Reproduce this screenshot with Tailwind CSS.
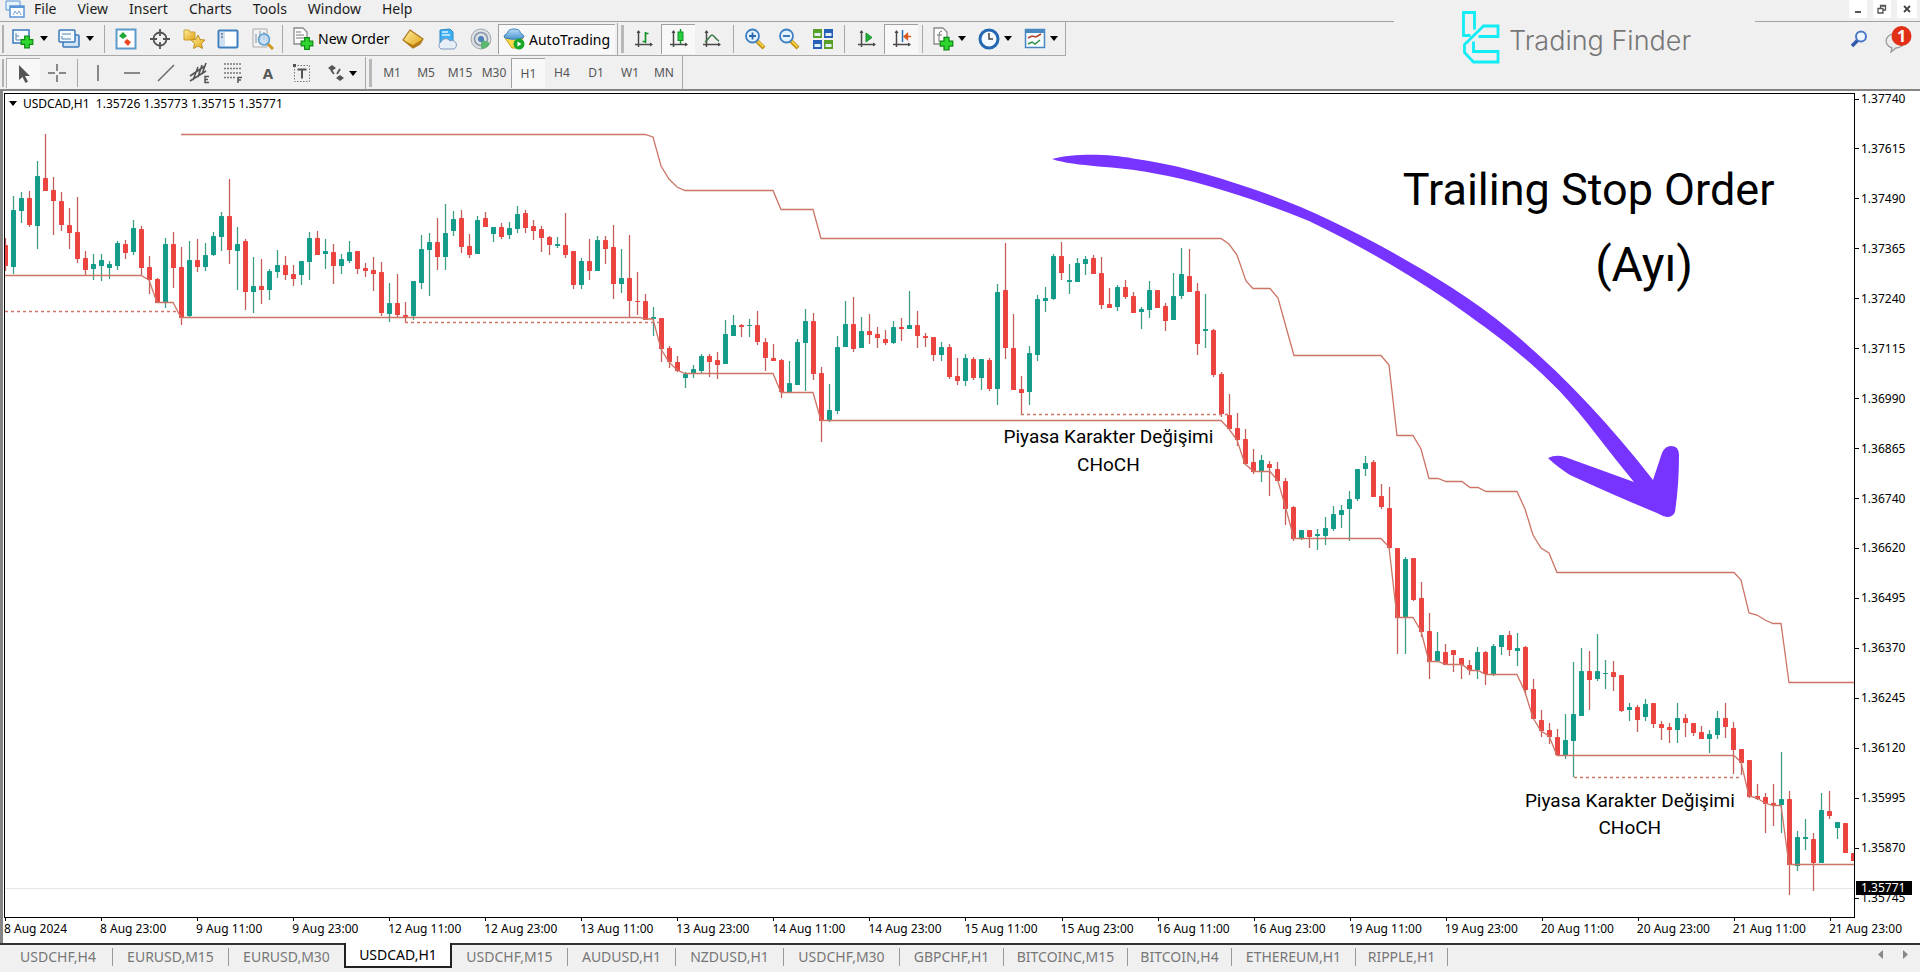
<!DOCTYPE html>
<html lang="en">
<head>
<meta charset="utf-8">
<title>USDCAD,H1</title>
<script src="https://cdn.jsdelivr.net/npm/@tailwindcss/browser@4"></script>
</head>
<body class="bg-[#f0f0f0] text-black">
<svg class="absolute h-0 w-0" aria-hidden="true">
  <defs>
    <linearGradient id="gold" x1="0" y1="0" x2="1" y2="1"><stop offset="0" stop-color="#fff0a0"/><stop offset="1" stop-color="#e0a010"/></linearGradient>
    <linearGradient id="sky" x1="0" y1="0" x2="0" y2="1"><stop offset="0" stop-color="#b8dcf8"/><stop offset="1" stop-color="#4a94d0"/></linearGradient>
    <symbol id="plus" viewBox="0 0 12 12"><path d="M4 1h4v3h3v4H8v3H4V8H1V4h3z" fill="#2fd62f" stroke="#0b8a12"/></symbol>
    <symbol id="caret" viewBox="0 0 8 5"><path d="M0 0h8L4 5z" fill="#000"/></symbol>
    <symbol id="axes" viewBox="0 0 20 20"><path d="M4.500 2v16M1 15.500h17" stroke="#4a4a4a" stroke-width="1.500" fill="none"/><path d="M2.500 4l2-3 2 3zM16 13.500l3 2-3 2z" fill="#4a4a4a"/></symbol>
    <symbol id="lens" viewBox="0 0 22 22"><path d="M13 13l7 7" stroke="#c08a10" stroke-width="4"/><path d="M13.500 13l6 6" stroke="#f6d040" stroke-width="2"/><circle cx="8.500" cy="8" r="6.500" fill="#e4f3fd" stroke="#3e7fc4" stroke-width="1.800"/></symbol>
  </defs>
</svg>

<div class="flex min-h-screen flex-col font-['Noto_Sans','Open_Sans',sans-serif]">
  <header class="relative">
    <nav class="flex h-[22px] items-center border-b border-[#a3a3a3] pb-[3px] text-[14px] leading-[18px] text-[#1c1c1c]" aria-label="Main menu">
      <svg class="mr-[9px] ml-[5px] h-[18px] w-5" viewBox="0 0 20 18"><path d="M1 1h14v9H1z" fill="#e8f2fc" stroke="#5b95d6"/><path d="M5 6h14v11H5z" fill="#fff" stroke="#5b95d6" stroke-width="1.500"/><path d="M5 7h14" stroke="#5b95d6" stroke-width="2"/><path d="M8 15l2-4 2 3 2-3 2 4" fill="none" stroke="#7aa6da"/></svg>
      <div class="flex gap-[21px]">
        <button>File</button><button>View</button><button>Insert</button><button>Charts</button><button>Tools</button><button>Window</button><button>Help</button>
      </div>
      <div class="mr-[3px] ml-auto flex gap-[6px] self-start">
        <button aria-label="Minimize" class="flex h-[18px] w-[18px] items-center justify-center bg-white"><svg class="h-3 w-3" viewBox="0 0 12 12"><path d="M3 9h6" stroke="#555" stroke-width="2"/></svg></button>
        <button aria-label="Restore" class="flex h-[18px] w-[18px] items-center justify-center bg-white"><svg class="h-3 w-3" viewBox="0 0 12 12"><path d="M2 5.500h5V10H2zM4.500 5V2.500h5V7H7M4.500 3h5" fill="none" stroke="#555" stroke-width="1.300"/></svg></button>
        <button aria-label="Close" class="flex h-[18px] w-[20px] items-center justify-center bg-white"><svg class="h-3 w-3" viewBox="0 0 12 12"><path d="M3 3l6 6M9 3l-6 6" stroke="#444" stroke-width="1.800"/></svg></button>
      </div>
    </nav>

    <div class="flex justify-between">
      <div class="flex h-[34px] items-center border-r border-b border-[#a8a8a8] text-[14px]" role="toolbar" aria-label="Standard">
        <span class="mx-[2px] h-7 w-[2px] bg-[#b0b0b0]"></span>
        <button class="flex w-12 items-center gap-[6px] pl-[6px]" aria-label="New chart"><svg class="h-[22px] w-[22px]" viewBox="0 0 22 22"><rect x="1" y="2" width="16" height="13" fill="#f4faff" stroke="#3a7ab8" stroke-width="1.500"/><path d="M4 5v7h10M4 8h3" stroke="#5a86ac" fill="none"/><use href="#plus" x="8" y="7" width="14" height="14"/></svg><svg class="h-[5px] w-2"><use href="#caret"/></svg></button>
        <button class="flex w-12 items-center gap-[6px] pl-1" aria-label="Profiles"><svg class="h-[22px] w-[22px]" viewBox="0 0 22 22"><rect x="5" y="7" width="16" height="12" rx="1" fill="#cfe4f7" stroke="#3a7ab8" stroke-width="1.500"/><rect x="1" y="2" width="16" height="12" rx="1" fill="#f4faff" stroke="#3a7ab8" stroke-width="1.500"/><path d="M4 8v3h9M4 6h9" stroke="#5a86ac" fill="none"/></svg><svg class="h-[5px] w-2"><use href="#caret"/></svg></button>
        <span class="mr-[4px] ml-[2px] h-7 w-px bg-[#a8a8a8]"></span>
        <button class="flex w-[34px] justify-center" aria-label="Market Watch"><svg class="h-[22px] w-[22px]" viewBox="0 0 22 22"><rect x="1.500" y="1.500" width="19" height="19" fill="#fff" stroke="#5c9ccc" stroke-width="2"/><path d="M8 4l4 4-4 3-4-3z" fill="#20a838"/><path d="M12 11l4 3-3 4-4-4z" fill="#e84820"/></svg></button>
        <button class="flex w-[34px] justify-center" aria-label="Data window"><svg class="h-[22px] w-[22px]" viewBox="0 0 22 22"><circle cx="11" cy="11" r="6.500" fill="none" stroke="#555" stroke-width="1.800"/><path d="M11 1v7M11 14v7M1 11h7M14 11h7" stroke="#555" stroke-width="1.800"/></svg></button>
        <button class="flex w-[34px] justify-center" aria-label="Navigator"><svg class="h-[22px] w-[22px]" viewBox="0 0 22 22"><path d="M1 2h5l1 2h5v8H1z" fill="url(#gold)" stroke="#c8a030"/><path d="M15 7l2.200 4.500 4.800.5-3.500 3.500 1 5-4.500-2.500-4.500 2.500 1-5L8 12l4.800-.5z" fill="url(#gold)" stroke="#c09020"/></svg></button>
        <button class="flex w-[34px] justify-center" aria-label="Terminal"><svg class="h-[22px] w-[22px]" viewBox="0 0 22 22"><rect x="1.500" y="2.500" width="19" height="17" rx="1" fill="#fff" stroke="#3f7fc0" stroke-width="2"/><path d="M3 4h5v14H3z" fill="#cfe0f2"/><path d="M4 6h2M4 9h2" stroke="#345"/></svg></button>
        <button class="flex w-[36px] justify-center" aria-label="Strategy tester"><svg class="h-[22px] w-[22px]" viewBox="0 0 22 22"><path d="M1 1h14v18H1z" fill="#f2f2f2" stroke="#aaa"/><path d="M4 6v9M8 3v9M12 4v8" stroke="#7890a8"/><path d="M16 16l5 5" stroke="#d0981c" stroke-width="3"/><circle cx="12" cy="11.500" r="5.500" fill="#b8daf4aa" stroke="#5c9ccc" stroke-width="1.500"/></svg></button>
        <span class="mr-[5px] ml-[1px] h-7 w-px bg-[#a8a8a8]"></span>
        <button class="flex w-[108px] items-center gap-1 whitespace-nowrap pl-1"><svg class="h-6 w-[22px] shrink-0" viewBox="0 0 22 24"><path d="M2 1h9l4 4v12H2z" fill="#fdfdfd" stroke="#8a8a8a" stroke-width="1.300"/><path d="M4 5h5M4 8h8M4 11h8" stroke="#777"/><use href="#plus" x="8" y="9" width="14" height="15"/></svg>New Order</button>
        <button class="flex w-[34px] justify-center" aria-label="MetaEditor"><svg class="h-[22px] w-[22px]" viewBox="0 0 22 22"><path d="M8 2l13 9-3 5-7 4-10-8z" fill="url(#gold)" stroke="#a87820" stroke-width="1.200"/><path d="M1 12l10 5 10-6-3 5-7 4z" fill="#b87c14"/></svg></button>
        <button class="flex w-[34px] justify-center" aria-label="Hosting"><svg class="h-[22px] w-[22px]" viewBox="0 0 22 22"><path d="M4 2l10-1 3 3v11H4z" fill="#3fb0f0" stroke="#2888c8"/><path d="M6 4h6M6 7h8" stroke="#d8f0ff" stroke-width="1.500"/><path d="M5 21a4 4 0 0 1 0-7 5 5 0 0 1 9-1 4 4 0 0 1 4 8z" fill="#e6eef8" stroke="#8098c0"/></svg></button>
        <button class="flex w-[34px] justify-center" aria-label="Signals"><svg class="h-[22px] w-[22px]" viewBox="0 0 22 22"><circle cx="11" cy="11" r="10" fill="#dce0e4" stroke="#a0a8b0"/><circle cx="11" cy="11" r="6.500" fill="none" stroke="#8898a8" stroke-width="1.500"/><path d="M11 11v10a10 10 0 0 0 9-6z" fill="#5cb870"/><circle cx="11" cy="11" r="3" fill="#5080b8"/></svg></button>
        <button class="mr-[2px] flex h-[30px] w-[117px] items-center gap-1 border-t border-l border-[#a0a0a0] bg-[#f8f8f8] pl-1 whitespace-nowrap"><svg class="h-[22px] w-[22px] shrink-0" viewBox="0 0 22 22"><path d="M2 10h18l-7 10H9z" fill="#f8d848" stroke="#c8a020"/><path d="M1 9c0-3 4-3 4-5s3-3 6-3 6 1 6 3 4 2 4 5c-4 3-16 3-20 0z" fill="url(#sky)" stroke="#3a80b8"/><circle cx="16" cy="16" r="5.500" fill="#18a828"/><path d="M14.500 13.500v5l4-2.500z" fill="#fff"/></svg>AutoTrading</button>
        <span class="mr-[3px] h-8 w-px bg-[#a8a8a8]"></span><span class="mr-[3px] h-7 w-[3px] bg-[#b8b8b8]"></span>
        <button class="flex h-[30px] w-[34px] items-center justify-center" aria-label="Bar chart"><svg class="h-5 w-5" viewBox="0 0 20 20"><use href="#axes"/><path d="M11.500 3v11M8.500 12.500h3M11.500 4.500h3" stroke="#149028" stroke-width="1.700"/></svg></button>
        <button class="flex h-[30px] w-[34px] items-center justify-center border-t border-l border-[#a0a0a0] bg-[#f8f8f8]" aria-label="Candlesticks"><svg class="h-5 w-5" viewBox="0 0 20 20"><use href="#axes"/><path d="M11.500 0v15" stroke="#149028" stroke-width="1.500"/><rect x="9" y="3" width="5" height="8.500" fill="#28d040" stroke="#149028"/></svg></button>
        <button class="flex h-[30px] w-[34px] items-center justify-center" aria-label="Line chart"><svg class="h-5 w-5" viewBox="0 0 20 20"><use href="#axes"/><path d="M3 13c4-3 5-7 7-7s4 5 7 6" fill="none" stroke="#3a7848" stroke-width="1.500"/></svg></button>
        <span class="mx-1 h-7 w-px bg-[#a8a8a8]"></span>
        <button class="flex w-[34px] justify-center" aria-label="Zoom in"><svg class="h-[22px] w-[22px]" viewBox="0 0 22 22"><use href="#lens"/><path d="M5 8h7M8.500 4.500v7" stroke="#2c68b0" stroke-width="1.800"/></svg></button>
        <button class="flex w-[34px] justify-center" aria-label="Zoom out"><svg class="h-[22px] w-[22px]" viewBox="0 0 22 22"><use href="#lens"/><path d="M5 8h7" stroke="#2c68b0" stroke-width="1.800"/></svg></button>
        <button class="flex w-[34px] justify-center" aria-label="Tile windows"><svg class="h-[22px] w-[22px]" viewBox="0 0 22 22"><path d="M1 1h9v9H1zM12 12h9v9h-9z" fill="#58a028"/><path d="M12 1h9v9h-9zM1 12h9v9H1z" fill="#2860b8"/><path d="M2.500 5h6v3h-6zM13.500 5h6v3h-6zM2.500 16h6v3h-6zM13.500 16h6v3h-6z" fill="#e4f0f8"/></svg></button>
        <span class="mr-[5px] ml-1 h-7 w-px bg-[#a8a8a8]"></span>
        <button class="flex h-[30px] w-[34px] items-center justify-center" aria-label="Auto scroll"><svg class="h-5 w-5" viewBox="0 0 20 20"><use href="#axes"/><path d="M9 4l6 4.500L9 13z" fill="#20b038" stroke="#149028"/></svg></button>
        <button class="flex h-[30px] w-[34px] items-center justify-center border-t border-l border-[#a0a0a0] bg-[#f8f8f8]" aria-label="Chart shift"><svg class="h-5 w-5" viewBox="0 0 20 20"><use href="#axes"/><path d="M10.500 1v12" stroke="#2870b0" stroke-width="1.500"/><path d="M12 7.500h7M15.500 4.500l-3.500 3 3.500 3z" stroke="#d85820" stroke-width="1.300" fill="#d85820"/></svg></button>
        <span class="mx-1 h-7 w-px bg-[#a8a8a8]"></span>
        <button class="flex w-[46px] items-center gap-1 pl-[5px]" aria-label="Indicators"><svg class="h-6 w-[22px]" viewBox="0 0 22 24"><path d="M2 1h9l4 4v12H2z" fill="#fdfdfd" stroke="#8a8a8a" stroke-width="1.300"/><path d="M10 4q-3 0-3 4v7M5 8h5" stroke="#777" fill="none"/><use href="#plus" x="7" y="9" width="15" height="15"/></svg><svg class="h-[5px] w-2"><use href="#caret"/></svg></button>
        <button class="flex w-[46px] items-center gap-1 pl-[5px]" aria-label="Periods"><svg class="h-[22px] w-[22px]" viewBox="0 0 22 22"><circle cx="11" cy="11" r="9" fill="#f4faff" stroke="#2468b4" stroke-width="3"/><path d="M11 5v6h4" stroke="#444" stroke-width="1.500" fill="none"/></svg><svg class="h-[5px] w-2"><use href="#caret"/></svg></button>
        <button class="flex w-[46px] items-center gap-1 pl-[5px]" aria-label="Templates"><svg class="h-[22px] w-[22px]" viewBox="0 0 22 22"><rect x="1.500" y="1.500" width="19" height="18" fill="#f6fbff" stroke="#4888c0" stroke-width="1.500"/><path d="M2 3.500h18" stroke="#4888c0" stroke-width="3"/><path d="M4 10l4-2 4 1 5-3" stroke="#b04028" fill="none" stroke-width="1.500"/><path d="M4 16l4-2 3 2 5-4" stroke="#2c9040" fill="none" stroke-width="1.500"/></svg><svg class="h-[5px] w-2"><use href="#caret"/></svg></button>
      </div>
      <div class="flex items-center gap-4 pr-2">
        <button aria-label="Search"><svg class="h-[18px] w-[18px]" viewBox="0 0 18 18"><path d="M8 10l-6 6" stroke="#3058a8" stroke-width="3.500"/><circle cx="11" cy="6.500" r="5" fill="#f0f6ff" stroke="#4878c8" stroke-width="2"/></svg></button>
        <button aria-label="Notifications: 1" class="relative h-7 w-7"><svg class="h-7 w-7" viewBox="0 0 28 28"><path d="M13 9a8 7 0 1 0-5 14l-1 4 5-4a8 7 0 0 0 8-6z" fill="#ececec" stroke="#999" stroke-width="1.300"/><circle cx="17.500" cy="11" r="10" fill="#e03018"/></svg><span class="absolute top-0 left-[7px] w-[21px] text-center font-['Open_Sans',sans-serif] text-[16px] leading-[22px] font-bold text-white">1</span></button>
      </div>
    </div>

    <div class="flex h-[33px] w-[683px] items-center border-r border-[#a8a8a8] pt-px text-[12px] text-[#555]" role="toolbar" aria-label="Line studies and periods">
      <span class="mx-[2px] h-7 w-[2px] bg-[#b0b0b0]"></span>
      <button class="flex h-[30px] w-[34px] items-center justify-center border-t border-l border-[#b0b0b0] bg-[#f8f8f8]" aria-label="Cursor"><svg class="h-5 w-5" viewBox="0 0 20 20"><path d="M5 1v15l3.500-3 3 6 2.500-1.500-3-5.500h5z" fill="#555"/></svg></button>
      <button class="flex w-[34px] justify-center" aria-label="Crosshair"><svg class="h-5 w-5" viewBox="0 0 20 20"><path d="M10 1v7M10 12v7M1 10h7M12 10h7" stroke="#666" stroke-width="1.500"/></svg></button>
      <span class="mx-[3px] h-7 w-px bg-[#a8a8a8]"></span>
      <button class="flex w-[34px] justify-center" aria-label="Vertical line"><svg class="h-5 w-5" viewBox="0 0 20 20"><path d="M10 2v16" stroke="#666" stroke-width="1.500"/></svg></button>
      <button class="flex w-[34px] justify-center" aria-label="Horizontal line"><svg class="h-5 w-5" viewBox="0 0 20 20"><path d="M2 10h16" stroke="#666" stroke-width="1.500"/></svg></button>
      <button class="flex w-[34px] justify-center" aria-label="Trendline"><svg class="h-5 w-5" viewBox="0 0 20 20"><path d="M2 18L18 2" stroke="#666" stroke-width="1.500"/></svg></button>
      <button class="flex w-[34px] justify-center" aria-label="Equidistant channel"><svg class="h-[22px] w-[22px]" viewBox="0 0 22 22"><path d="M1 14L16 4M1 19L17 9M4 18L9 5M9 15l4-12M13 12l4-11" stroke="#555" stroke-width="1.600"/><path d="M20 14.500h-4v6h4M16 17.500h3" stroke="#555" fill="none" stroke-width="1.500"/></svg></button>
      <button class="flex w-[34px] justify-center" aria-label="Fibonacci retracement"><svg class="h-[22px] w-[22px]" viewBox="0 0 22 22"><path d="M1 2h18M1 6.500h18M1 11h18M1 15.500h12" stroke="#777" stroke-width="1.400" stroke-dasharray="2 1"/><path d="M19 15.500h-4V21M15 18h3" stroke="#555" fill="none" stroke-width="1.500"/></svg></button>
      <button class="w-[34px] text-[15px] font-bold" aria-label="Text">A</button>
      <button class="flex w-[34px] justify-center" aria-label="Text label"><svg class="h-5 w-5" viewBox="0 0 20 20"><rect x="2.500" y="2.500" width="15" height="16" fill="none" stroke="#777" stroke-dasharray="1.500 1.500"/><path d="M1 1h3v3H1z" fill="#555"/><path d="M5.500 6.500h9M10 6v9.500" stroke="#555" stroke-width="2" fill="none"/></svg></button>
      <button class="flex w-[46px] items-center gap-1 pl-2" aria-label="Arrows"><svg class="h-[18px] w-[18px]" viewBox="0 0 18 18"><path d="M1 4l4-3 4 3-4 3zM9 14l4-3 4 3-4 3z" fill="#555"/><path d="M4 6l3 4M10 10l3-5" stroke="#555" stroke-width="1.800"/></svg><svg class="h-[5px] w-2"><use href="#caret"/></svg></button>
      <span class="mr-[3px] h-8 w-px bg-[#a8a8a8]"></span><span class="mr-[3px] h-7 w-[3px] bg-[#b8b8b8]"></span>
      <button class="w-[34px]">M1</button><button class="w-[34px]">M5</button><button class="w-[34px]">M15</button><button class="w-[34px]">M30</button><button class="h-[30px] w-[34px] border-t border-l border-[#a0a0a0] bg-[#f8f8f8]">H1</button><button class="w-[34px]">H4</button><button class="w-[34px]">D1</button><button class="w-[34px]">W1</button><button class="w-[34px]">MN</button>
    </div>

    <!-- brand -->
    <a href="#" class="absolute top-0 right-[165px] flex h-[84px] w-[361px] items-center gap-[9px] bg-[#f0f0f0] pb-[9px] pl-[68px]">
      <svg class="h-[54px] w-[38px]" viewBox="-1.500 -1.500 38 54" fill="none" stroke="#12ecf4" stroke-width="2.800"><path d="M11 17V0H0v23h7M15 24h19.500V13.500H20L1 32v8l9 9.500h24.500V39H10V29"/></svg>
      <span class="pt-2 font-['Inter',sans-serif] text-[27px] font-light text-[#777]">Trading Finder</span>
    </a>
  </header>

  <main class="flex flex-1 flex-col border-t-2 border-l-3 border-[#858585] bg-white pl-px text-[12px]">
    <div class="flex flex-1">
      <div class="flex flex-1 flex-col pt-[2px]">
        <div class="relative flex-1 border border-black">
          <svg id="plot" class="absolute inset-0 h-full w-full" viewBox="5 94 1849 823" preserveAspectRatio="none">
            <path d="M5 888.500H1854" stroke="#e6e6e6" fill="none"/>
            <g id="candles"></g>
            <g fill="none" stroke="#cc7466" stroke-width="1.300">
              <path d="M181 134.500H645L653 137 661 166 669 179 677 187 685 190.500H773L781 209.500H813L821 238.500H1221L1229 244 1237 255 1246 281 1253 288.500H1270L1278 298 1286 327 1294 355.500H1381L1389 365 1397 435.500H1413L1421 449 1429 478.500H1438L1446 481.500H1462L1470 487.500H1478L1486 491.500H1517L1525 509 1533 535 1541 548 1549 553 1557 572.500H1734L1741 580 1749 613 1757 615 1765 620 1773 623.500H1781L1789 682.500H1854"/>
              <path d="M5 275.500H141L149 280 157 302.500H173L181 317.500H640L645 319H653L661 349 669 362 677 370 685 373.500H773L781 392.500H813L821 420.500H1221L1229 429 1237 440 1245 464 1254 471.500H1270L1278 481 1286 509 1294 538.500H1381L1389 547 1397 617.500H1413L1421 631 1429 661.500H1438L1446 664.500H1462L1470 670.500H1478L1486 674.500H1517L1525 692 1533 718 1541 731 1549 736 1557 755.500H1734L1741 762 1749 796 1757 798 1765 803 1773 805.500H1781L1789 864.500H1854"/>
              <path stroke-dasharray="3 3" stroke-width="1.500" d="M5 311.500H179M405 322.500H660M1021 414.500H1229M1574 777.500H1742"/>
            </g>
            <path fill="#7733ff" d="M1052 159C1075 153 1110 154 1133 158.500C1172 163.500 1211 175 1250 188C1297 203.500 1343 225 1390 251C1430 273.500 1470 297 1510 330C1558 370 1605 418 1653 480L1662 453Q1665 446 1671 446Q1679 446 1679 455Q1679 485 1675 512Q1673 517 1667 517Q1662 516 1657 513Q1620 498 1570 475Q1556 466 1548 458Q1556 454 1565 457L1634 482C1609 452 1585 418 1560 391.500C1522 352 1485 327 1447 300C1401 269 1355 243 1309 221C1257 200 1204 182 1152 173C1119 166 1075 167 1052 159z"/>
          </svg>
          <p class="absolute top-0 left-1 flex items-center gap-[6px] leading-[19px]"><svg class="h-[5px] w-2"><use href="#caret"/></svg><span class="whitespace-pre">USDCAD,H1  1.35726 1.35773 1.35715 1.35771</span></p>
          <div class="font-['Roboto',sans-serif] whitespace-nowrap">
            <p class="absolute top-[8.600%] left-[75.600%] text-[45px] leading-[50px]">Trailing Stop Order</p>
            <p class="absolute top-[17.700%] left-[86%] text-[48px] leading-[50px]">(Ayı)</p>
            <p class="absolute top-[40%] left-[54%] text-center text-[19px] leading-7">Piyasa Karakter Değişimi<br>CHoCH</p>
            <p class="absolute top-[84.200%] left-[82.200%] text-center text-[19px] leading-[27px]">Piyasa Karakter Değişimi<br>CHoCH</p>
          </div>
        </div>
        <ol id="times" class="flex h-[25px] pl-px leading-[22px] whitespace-nowrap"></ol>
      </div>
      <div class="relative flex w-[65px] shrink-0 flex-col justify-between pb-[37px]" id="prices">
        <span class="absolute bottom-[48px] left-[1px] z-10 h-[14px] w-[56px] bg-black pl-[5px] leading-[14px] text-white">1.35771</span>
      </div>
    </div>
  </main>

  <footer class="flex h-[29px] items-start border-t-2 border-[#333] pb-[5px] text-[14px] text-[#777]">
    <div role="tablist" class="flex leading-[20px] whitespace-nowrap">
      <button role="tab" class="w-[112px] pl-1">USDCHF,H4</button>
      <button role="tab" class="w-[116px]"><span class="block border-l border-[#999] leading-[18px]">EURUSD,M15</span></button>
      <button role="tab" class="w-[116px]"><span class="block border-l border-[#999] leading-[18px]">EURUSD,M30</span></button>
      <button role="tab" aria-selected="true" class="-mt-[2px] h-[25px] w-[108px] border-x-2 border-b-2 border-[#222] bg-white text-black">USDCAD,H1</button>
      <button role="tab" class="w-[116px]"><span class="block border-r border-[#999] leading-[18px]">USDCHF,M15</span></button>
      <button role="tab" class="w-[108px]"><span class="block border-r border-[#999] leading-[18px]">AUDUSD,H1</span></button>
      <button role="tab" class="w-[108px]"><span class="block border-r border-[#999] leading-[18px]">NZDUSD,H1</span></button>
      <button role="tab" class="w-[116px]"><span class="block border-r border-[#999] leading-[18px]">USDCHF,M30</span></button>
      <button role="tab" class="w-[104px]"><span class="block border-r border-[#999] leading-[18px]">GBPCHF,H1</span></button>
      <button role="tab" class="w-[124px]"><span class="block border-r border-[#999] leading-[18px]">BITCOINC,M15</span></button>
      <button role="tab" class="w-[104px]"><span class="block border-r border-[#999] leading-[18px]">BITCOIN,H4</span></button>
      <button role="tab" class="w-[124px]"><span class="block border-r border-[#999] leading-[18px]">ETHEREUM,H1</span></button>
      <button role="tab" class="w-[92px]"><span class="block border-r border-[#999] leading-[18px]">RIPPLE,H1</span></button>
    </div>
    <div class="mt-[5px] mr-3 ml-auto flex gap-5">
      <button aria-label="Scroll tabs left"><svg class="h-[9px] w-[5px]" viewBox="0 0 5 9"><path d="M5 0v9L0 4.500z" fill="#888"/></svg></button>
      <button aria-label="Scroll tabs right"><svg class="h-[9px] w-[5px]" viewBox="0 0 5 9"><path d="M0 0v9l5-4.500z" fill="#888"/></svg></button>
    </div>
  </footer>
</div>

<script>
// One entry per hourly candle: direction, high, body top, body bottom, low (plot units).
const candles = `r238 245 266 271,g196 210 267 274,g192 198 211 223,r191 198 225 227,g161 176 226 249,r134 178 191 191,r177 190 201 235,r192 201 225 231,r208 225 233 249,r197 232 259 263,r251 258 270 275,g254 264 269 280,g254 260 266 281,g261 264 268 279,g241 243 266 270,r240 244 253 259,g220 228 252 255,r226 229 268 275,r256 267 280 294,r278 279 303 303,g238 244 303 308,r232 244 268 288,r247 267 318 325,g241 260 316 317,r239 260 267 272,g243 255 267 271,g232 236 255 256,g212 216 237 251,r179 216 250 264,g227 244 251 290,r239 241 292 310,g257 286 292 313,r259 286 290 304,g269 271 290 300,g250 265 272 278,r256 265 275 280,r265 274 279 286,g261 261 275 285,g232 238 262 280,r231 238 255 255,g239 251 254 269,r244 252 266 284,g254 259 266 274,g241 252 261 263,r251 251 269 274,r263 268 271 277,r257 270 274 291,r262 272 313 316,g283 303 314 322,r274 303 315 318,r302 315 317 322,g281 281 316 320,g235 249 283 289,g233 242 250 296,r218 242 257 270,g204 233 257 270,g211 219 231 236,r210 218 247 253,r234 246 255 258,g216 220 254 254,r212 218 227 227,g227 227 234 242,r223 227 237 239,g222 228 235 239,g206 214 229 233,r210 213 228 233,r220 226 231 240,r226 229 238 252,r236 237 245 255,g237 244 246 248,r213 245 255 258,r251 251 285 289,g258 261 285 289,r239 261 271 280,g236 240 271 271,r236 240 249 264,r225 247 284 299,g249 278 284 293,r235 278 301 317,r272 301 302 315,r294 301 320 320,g307 317 319 336,r318 318 349 362,r346 348 362 368,r356 362 371 372,g372 374 378 388,g365 369 374 378,g354 356 371 374,r354 356 362 377,r352 360 365 379,g320 334 364 364,g315 325 336 336,r324 325 327 337,g319 325 326 337,r311 325 342 345,r338 342 358 371,r344 358 361 361,r359 360 392 398,g361 383 392 392,g339 342 385 385,g309 321 343 391,r313 321 374 380,r367 373 421 442,g384 410 420 422,g336 347 411 414,g301 324 347 347,r297 324 349 352,g317 331 348 348,r314 331 335 344,r327 334 338 348,r330 339 343 345,g321 327 343 344,r318 327 329 341,g291 325 329 329,r311 325 336 348,r333 336 338 347,r337 337 355 361,g342 347 355 361,r344 347 377 379,r358 376 381 385,g354 358 381 386,r357 359 378 380,g359 359 378 390,r358 360 389 391,g284 292 389 405,r243 290 348 359,r314 348 390 390,r376 389 393 415,g346 353 392 405,g295 299 355 361,g287 298 301 312,g254 256 299 300,r242 256 273 280,g264 280 282 294,g258 263 282 282,g256 259 264 275,r255 258 274 274,r257 273 305 309,r288 304 308 308,g285 287 307 311,r280 287 297 299,r292 296 313 313,g307 309 312 329,g281 290 310 318,r290 290 308 308,r303 306 321 331,g273 296 320 320,g248 274 296 299,r249 276 292 292,r283 291 344 355,g294 329 331 348,r329 330 375 377,r372 374 414 417,r394 415 429 430,r413 428 440 446,r429 439 464 465,r449 462 472 474,g455 460 471 482,r461 464 468 496,r462 469 481 481,r478 481 509 525,r506 507 539 541,g530 530 539 540,r530 530 537 548,g529 534 536 550,g517 528 536 545,g506 514 529 531,g505 510 515 528,g491 499 509 541,g469 469 499 501,g456 463 469 476,r460 462 497 497,r484 496 507 509,r487 508 548 549,r548 548 618 654,g557 559 617 654,r558 558 600 601,r582 598 632 637,r613 631 662 679,g632 651 661 661,r644 652 665 665,r650 650 655 672,r658 658 665 679,r660 665 670 675,g647 652 670 679,r651 652 674 685,g644 646 674 676,g635 635 647 655,r631 635 650 656,g633 648 651 666,r646 647 690 695,r679 689 719 719,r710 720 731 737,r723 730 737 744,r729 737 755 756,g714 740 755 759,g662 714 741 777,g648 671 716 716,r651 671 680 710,g634 671 679 681,g660 673 674 689,r661 672 677 691,r675 675 711 712,g703 707 710 721,r705 707 720 732,g699 704 717 721,r703 703 724 728,r721 724 728 740,r723 727 730 743,g703 718 730 743,r714 718 723 737,r723 723 733 736,r726 732 739 739,g730 734 739 753,g711 718 735 739,r703 718 727 738,r722 728 750 774,r749 749 763 775,r760 760 797 798,r784 796 799 800,r793 797 804 833,r784 803 805 826,g752 799 805 833,r791 799 865 895,g831 837 866 871,g819 837 839 850,r833 839 863 891,g793 810 863 863,r791 811 816 819,g822 822 828 839,r823 823 853 853,r853 853 861 861`.split(',');
document.getElementById('candles').innerHTML = candles.map((c, i) => {
  const [h, t, b, l] = c.slice(1).split(' ').map(Number), x = 5 + i * 8, up = c[0] === 'g';
  return `<path d="M${x + .5} ${h}V${l}" stroke="${up ? '#3f9e86' : '#c4605c'}" stroke-width="1.300"/><rect x="${x - 2}" y="${t}" width="5" height="${Math.max(1, b - t)}" rx="0.600" fill="${up ? '#149c8a' : '#ec4440'}"/>`;
}).join('');

const times = ['8 Aug 2024', '8 Aug 23:00', '9 Aug 11:00', '9 Aug 23:00', '12 Aug 11:00', '12 Aug 23:00', '13 Aug 11:00', '13 Aug 23:00', '14 Aug 11:00', '14 Aug 23:00', '15 Aug 11:00', '15 Aug 23:00', '16 Aug 11:00', '16 Aug 23:00', '19 Aug 11:00', '19 Aug 23:00', '20 Aug 11:00', '20 Aug 23:00', '21 Aug 11:00', '21 Aug 23:00'];
document.getElementById('times').innerHTML = times.map(t =>
  `<li class="w-[5.192%] shrink-0"><span class="block h-[3px] w-px bg-black"></span><span class="-ml-px block leading-4">${t}</span></li>`).join('');

const prices = ['1.37740', '1.37615', '1.37490', '1.37365', '1.37240', '1.37115', '1.36990', '1.36865', '1.36740', '1.36620', '1.36495', '1.36370', '1.36245', '1.36120', '1.35995', '1.35870', '1.35745'];
document.getElementById('prices').insertAdjacentHTML('beforeend', prices.map(p =>
  `<div class="flex h-4 items-center gap-[2px]"><span class="h-px w-1 bg-black"></span>${p}</div>`).join(''));
</script>
</body>
</html>
